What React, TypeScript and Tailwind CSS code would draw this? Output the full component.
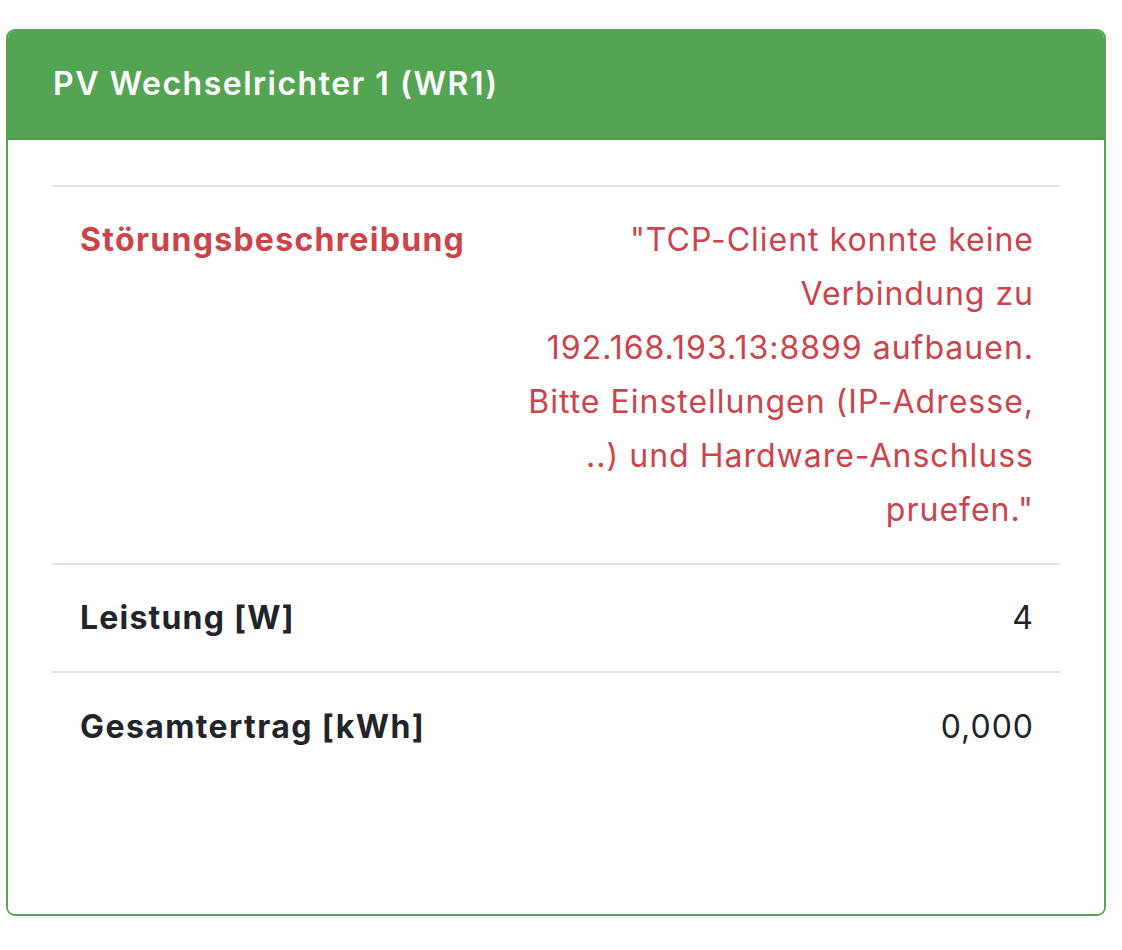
import React from "react";

export default function App() {
  const font = { fontFamily: 'Inter, "Noto Sans", sans-serif' };
  const lines = [
    '"TCP-Client konnte keine',
    "Verbindung zu",
    "192.168.193.13:8899 aufbauen.",
    "Bitte Einstellungen (IP-Adresse,",
    "..) und Hardware-Anschluss",
    'pruefen."',
  ];
  return (
    <div className="min-h-[950px] w-[1122px] bg-white pl-[6px] pt-[29px]" style={font}>
      <div className="flex h-[887px] w-[1100px] flex-col overflow-hidden rounded-[9px] border-2 border-[#55a653]">
        <div className="flex h-[109px] items-center border-b-2 border-[#4c9a4a] bg-[#54a553] px-[45px] pb-[2px]">
          <h1 className="text-[32px] font-semibold tracking-[1.5px] text-white">PV Wechselrichter 1 (WR1)</h1>
        </div>
        <div className="flex-1 bg-white px-[44px] pt-[45px]">
          <div className="border-t-2 border-[#dee2e6] text-[32px] leading-[54px] tracking-[1px]">
            <div className="flex justify-between border-b-2 border-[#dee2e6] pl-[28px] pr-[26px] py-[26px] text-[#cb434b]">
              <div className="font-bold tracking-[1.3px]">Störungsbeschreibung</div>
              <div className="text-right">
                {lines.map((l) => (
                  <div key={l} className="whitespace-nowrap">{l}</div>
                ))}
              </div>
            </div>
            <div className="flex justify-between border-b-2 border-[#dee2e6] pl-[28px] pr-[26px] py-[26px] text-[#212529]">
              <div className="font-bold tracking-[1.2px]">Leistung [W]</div>
              <div>4</div>
            </div>
            <div className="flex justify-between pl-[28px] pr-[26px] py-[27px] text-[#212529]">
              <div className="font-bold tracking-[1.4px]">Gesamtertrag [kWh]</div>
              <div>0,000</div>
            </div>
          </div>
        </div>
      </div>
    </div>
  );
}
